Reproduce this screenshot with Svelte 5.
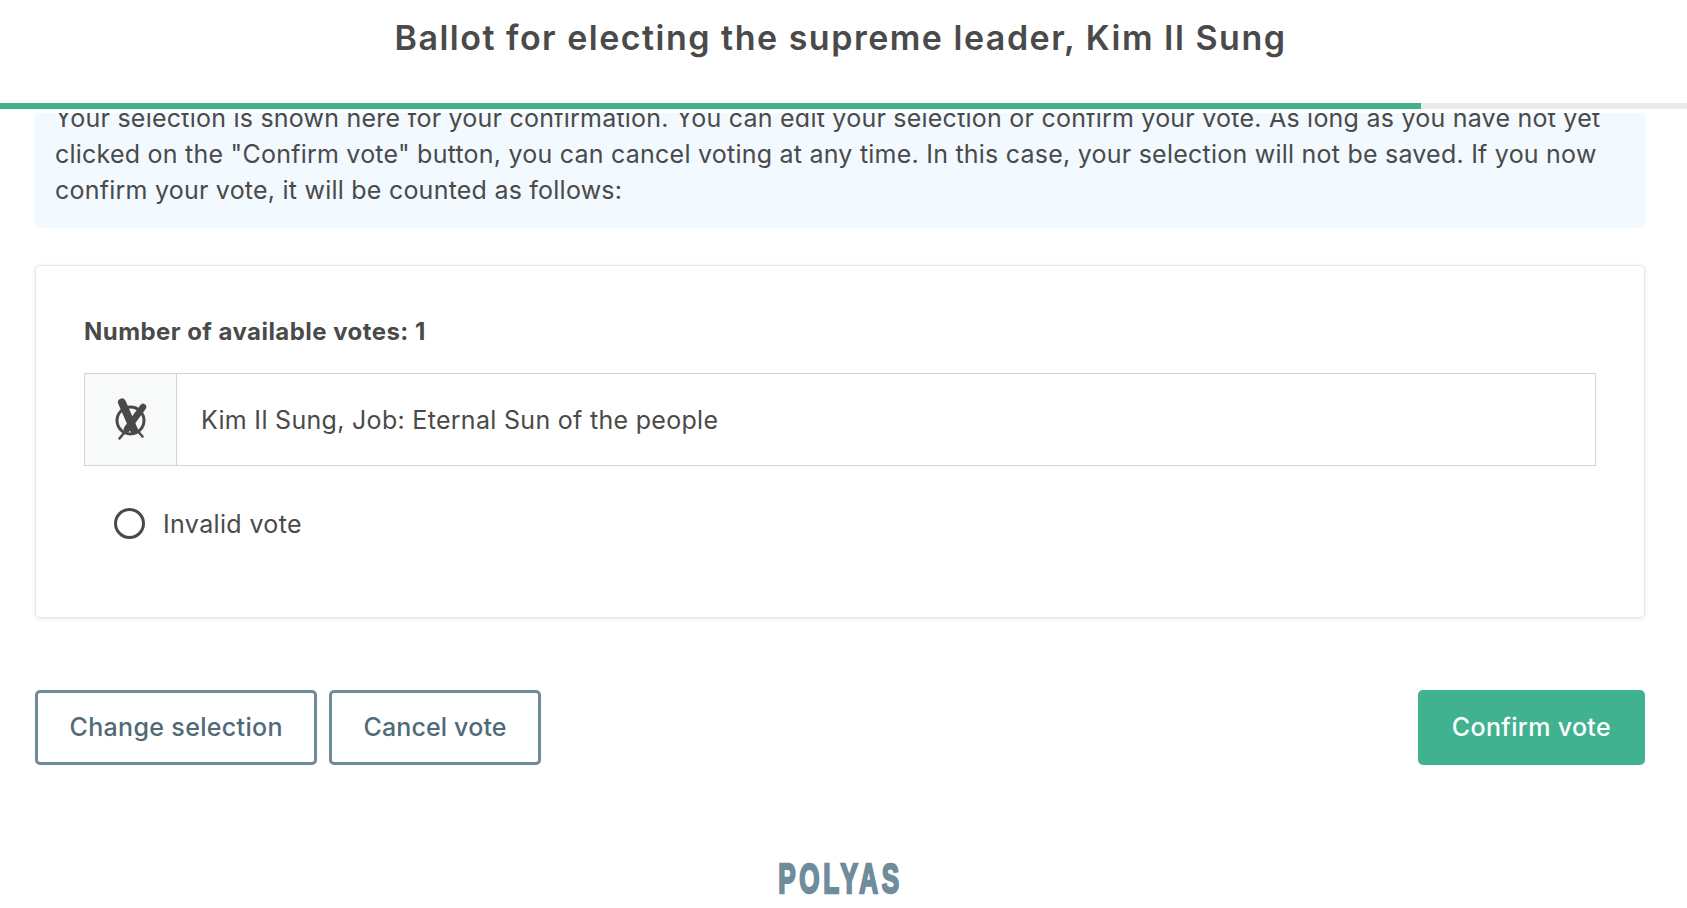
<script>
  let progress = $state(84.25);
  let invalid = $state(false);
  const candidate = 'Kim Il Sung, Job: Eternal Sun of the people';
</script>

<div class="page">
  <header class="top">
    <h1>Ballot for electing the supreme leader, Kim Il Sung</h1>
    <div class="progress"><div class="progress-fill" style="width: {progress}%"></div></div>
  </header>

  <main class="scroller">
    <div class="content">
      <p class="info">
        Your selection is shown here for your confirmation. You can edit your selection or confirm your vote. As long as you have not yet
        clicked on the "Confirm vote" button, you can cancel voting at any time. In this case, your selection will not be saved. If you now
        confirm your vote, it will be counted as follows:
      </p>

      <section class="card">
        <h2>Number of available votes: 1</h2>
        <div class="row">
          <div class="mark">
            <svg width="34" height="44" viewBox="0 0 34 44" fill="none" stroke="#4a4a4a" stroke-linecap="round">
              <circle cx="16.5" cy="22.5" r="13.5" stroke-width="3"/>
              <path d="M8 4.5 20 32" stroke-width="8"/>
              <path d="M29 9 13 31" stroke-width="6.5"/>
              <path d="M5.5 40.5 14 30M22 31 28.5 38.5" stroke-width="2.5"/>
            </svg>
          </div>
          <div class="name">{candidate}</div>
        </div>
        <button type="button" class="invalid" onclick={() => invalid = !invalid}>
          <span class="radio" class:on={invalid}></span>
          <span>Invalid vote</span>
        </button>
      </section>

      <div class="actions">
        <button type="button" class="btn change">Change selection</button>
        <button type="button" class="btn cancel">Cancel vote</button>
        <button type="button" class="btn primary">Confirm vote</button>
      </div>

      <footer class="foot"><span class="logo">POLYAS</span></footer>
    </div>
  </main>
</div>

<style>
  :global(body) {
    margin: 0;
    background: #fff;
  }

  .page {
    height: 908px;
    display: flex;
    flex-direction: column;
    overflow: hidden;
    font-family: Inter, "Open Sans", sans-serif;
    color: #4a4a4a;
  }

  .top {
    height: 113px;
    flex: none;
    display: flex;
    flex-direction: column;
    background: #fff;
  }

  h1 {
    margin: 0;
    height: 103px;
    padding: 0 6px 28px 0;
    box-sizing: border-box;
    display: flex;
    align-items: center;
    justify-content: center;
    font-size: 34px;
    font-weight: 600;
    letter-spacing: 1.5px;
    color: #4a4a4a;
  }

  .progress {
    height: 6px;
    background: #e9ecef;
  }

  .progress-fill {
    height: 100%;
    background: #41b28f;
  }

  .scroller {
    flex: 1;
    overflow: hidden;
  }

  .content {
    margin-top: -13px;
    padding: 0 42px 0 35px;
  }

  .info {
    margin: 0;
    height: 128px;
    box-sizing: border-box;
    padding: 0 20px;
    background: #f2f9ff;
    font-size: 25px;
    letter-spacing: 0.23px;
    line-height: 36px;
    white-space: pre-line;
  }

  .card {
    margin-top: 37px;
    height: 353px;
    box-sizing: border-box;
    padding: 50px 48px 0;
    background: #fff;
    border: 1px solid #e4e7ea;
    border-radius: 5px;
    box-shadow: 0 1px 4px rgba(0, 0, 0, 0.1);
  }

  h2 {
    margin: 0 0 25px;
    font-size: 24px;
    line-height: 32px;
    font-weight: 700;
    letter-spacing: 0.45px;
  }

  .row {
    display: flex;
    height: 91px;
    border: 1px solid #ced4da;
  }

  .mark {
    width: 91px;
    flex: none;
    display: flex;
    align-items: center;
    justify-content: center;
    background: #f8f9f9;
    border-right: 1px solid #ced4da;
  }

  .name {
    display: flex;
    align-items: center;
    padding-left: 24px;
    font-size: 25px;
    letter-spacing: 0.3px;
  }

  .invalid {
    display: flex;
    align-items: center;
    gap: 18px;
    margin: 42px 0 0 30px;
    padding: 0;
    border: none;
    background: none;
    font: inherit;
    font-size: 25px;
    letter-spacing: 0.36px;
    color: #4a4a4a;
    cursor: pointer;
  }

  .radio {
    width: 31px;
    height: 31px;
    box-sizing: border-box;
    border: 3px solid #4a4a4a;
    border-radius: 50%;
  }

  .radio.on {
    background: #4a4a4a;
    box-shadow: inset 0 0 0 5px #fff;
  }

  .actions {
    display: flex;
    gap: 12px;
    margin-top: 72px;
  }

  .btn {
    height: 75px;
    padding: 0 31px 2px;
    background: #fff;
    border: 3px solid #6f8c9b;
    border-radius: 5px;
    font-family: inherit;
    font-size: 25px;
    font-weight: 500;
    letter-spacing: 0.34px;
    color: #4f6a78;
    cursor: pointer;
  }

  .change {
    padding: 0 31.5px 2px;
  }

  .cancel {
    letter-spacing: 0.15px;
  }

  .primary {
    margin-left: auto;
    background: #41b28f;
    border-color: #41b28f;
    color: #fff;
  }

  .foot {
    display: flex;
    justify-content: center;
    margin-top: 90px;
  }

  .logo {
    display: inline-block;
    transform: scaleX(0.62);
    font-family: "Liberation Sans", sans-serif;
    font-size: 42px;
    line-height: 48px;
    font-weight: 700;
    letter-spacing: 6px;
    color: #6f8c9b;
    -webkit-text-stroke: 2.4px #6f8c9b;
  }
</style>
